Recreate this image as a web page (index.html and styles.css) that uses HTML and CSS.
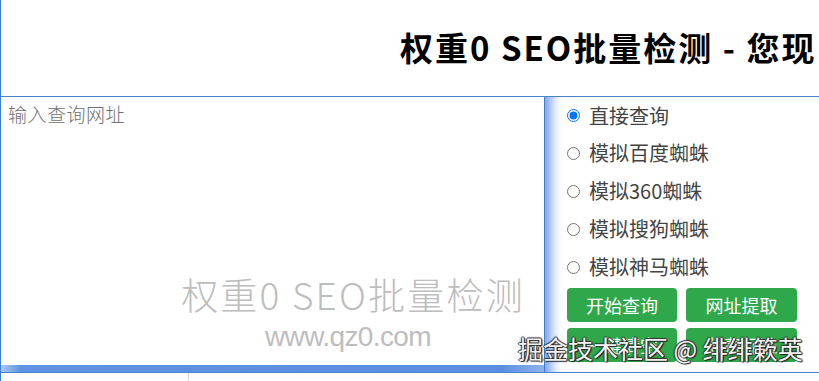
FILE: index.html
```html
<!DOCTYPE html>
<html lang="zh-CN">
<head>
<meta charset="utf-8">
<title>权重0 SEO批量检测</title>
<link rel="stylesheet" href="styles.css">
</head>
<body>
<div class="page">
  <header class="head">
    <h1>权重0 SEO批量检测 - 您现在的位置</h1>
  </header>
  <div class="main">
    <div class="input-area">
      <div class="ta-wrap">
        <div class="wm">
          <div class="wm-title">权重0 SEO批量检测</div>
          <div class="wm-url">www.qz0.com</div>
        </div>
        <textarea class="ta" placeholder="输入查询网址"></textarea>
      </div>
      <div class="ta-bar"></div>
    </div>
    <div class="panel">
      <label class="opt"><input type="radio" name="mode" checked><span>直接查询</span></label>
      <label class="opt"><input type="radio" name="mode"><span>模拟百度蜘蛛</span></label>
      <label class="opt"><input type="radio" name="mode"><span>模拟360蜘蛛</span></label>
      <label class="opt"><input type="radio" name="mode"><span>模拟搜狗蜘蛛</span></label>
      <label class="opt"><input type="radio" name="mode"><span>模拟神马蜘蛛</span></label>
      <div class="btns">
        <button class="btn">开始查询</button>
        <button class="btn">网址提取</button>
        <button class="btn">一键清空</button>
        <button class="btn">收费标准</button>
      </div>
    </div>
  </div>
  <div class="foot">
    <div class="foot-cell first"></div>
    <div class="foot-cell"></div>
  </div>
  <div class="juejin">掘金技术社区 @ 绯绯簌英</div>
</div>
</body>
</html>
```
FILE: styles.css
```css
html, body {
  margin: 0;
  padding: 0;
  background: #fff;
}
body {
  width: 819px;
  height: 381px;
  overflow: hidden;
}
.page {
  position: relative;
  height: 381px;
  border-left: 1px solid #3f7fd0;
  box-sizing: border-box;
}
.head {
  height: 96px;
  border-bottom: 1px solid #4a84c8;
  display: flex;
  align-items: center;
  padding-left: 399px;
  white-space: nowrap;
  overflow: hidden;
  background: #fff;
}
.head h1 {
  margin: 0;
  width: 416px;
  overflow: hidden;
  flex: none;
  font: 700 33px/1.2 "Noto Sans CJK SC", "Noto Sans", sans-serif;
  color: #000;
  letter-spacing: 2px;
}
.main {
  display: flex;
  height: 275px;
  border-bottom: 1px solid #4a84d0;
}
.input-area {
  width: 543px;
  display: flex;
  flex-direction: column;
}
.ta-wrap {
  position: relative;
  flex: 1;
}
.ta {
  position: relative;
  display: block;
  width: 100%;
  height: 100%;
  border: 0;
  outline: none;
  resize: none;
  margin: 0;
  padding: 4px 7px;
  box-sizing: border-box;
  background: transparent;
  font: 300 19px/26px "Noto Sans CJK SC", sans-serif;
  letter-spacing: 0.5px;
  color: #333;
}
.ta::placeholder {
  color: #707070;
}
.wm {
  position: absolute;
  left: 176px;
  top: 175px;
  width: 352px;
  text-align: center;
  color: #bdbdbd;
  pointer-events: none;
}
.wm-title {
  font: 300 37px/44px "Noto Sans CJK SC", sans-serif;
  white-space: nowrap;
  letter-spacing: 2.2px;
}
.wm-url {
  font: 400 28px/32px "Liberation Sans", Arial, sans-serif;
  margin-top: 5px;
  margin-left: -10px;
  letter-spacing: -0.6px;
}
.ta-bar {
  height: 7px;
  background: linear-gradient(to right, #a9c6f2 0, #5f92e2 20px, #5b8ee0 500px, #8fb4ee 543px);
}
.panel {
  flex: 1;
  border-left: 1px solid #3f7fd0;
  box-shadow: inset 14px 0 12px -8px rgba(70, 120, 225, 0.75);
  padding-left: 22px;
  display: flex;
  flex-direction: column;
}
.opt {
  height: 38px;
  display: flex;
  align-items: center;
  font: 400 20px/1 "Noto Sans CJK SC", sans-serif;
  color: #444;
}
.opt:first-child {
  height: 37px;
}
.opt input {
  margin: 0 9px 0 0;
  width: 13px;
  height: 13px;
}
.btns {
  margin-top: 2px;
  display: grid;
  grid-template-columns: 110px 111px;
  column-gap: 9px;
  row-gap: 6px;
}
.btn {
  height: 34px;
  border: 0;
  border-radius: 4px;
  background: #2ea84a;
  color: #fff;
  font: 400 18px/1 "Noto Sans CJK SC", sans-serif;
  padding: 0;
}
.foot {
  display: flex;
  height: 8px;
}
.foot-cell.first {
  width: 187px;
  border-right: 1px solid #d8d8d8;
}
.juejin {
  position: absolute;
  left: 517px;
  top: 333px;
  font: 400 25px/30px "Noto Sans CJK SC", sans-serif;
  color: #f2f2f2;
  white-space: nowrap;
  text-shadow: 1px 1px 1px #222, -1px 0 1px #333, 0 -1px 1px #333, 1px 0 1px #222;
}
```
